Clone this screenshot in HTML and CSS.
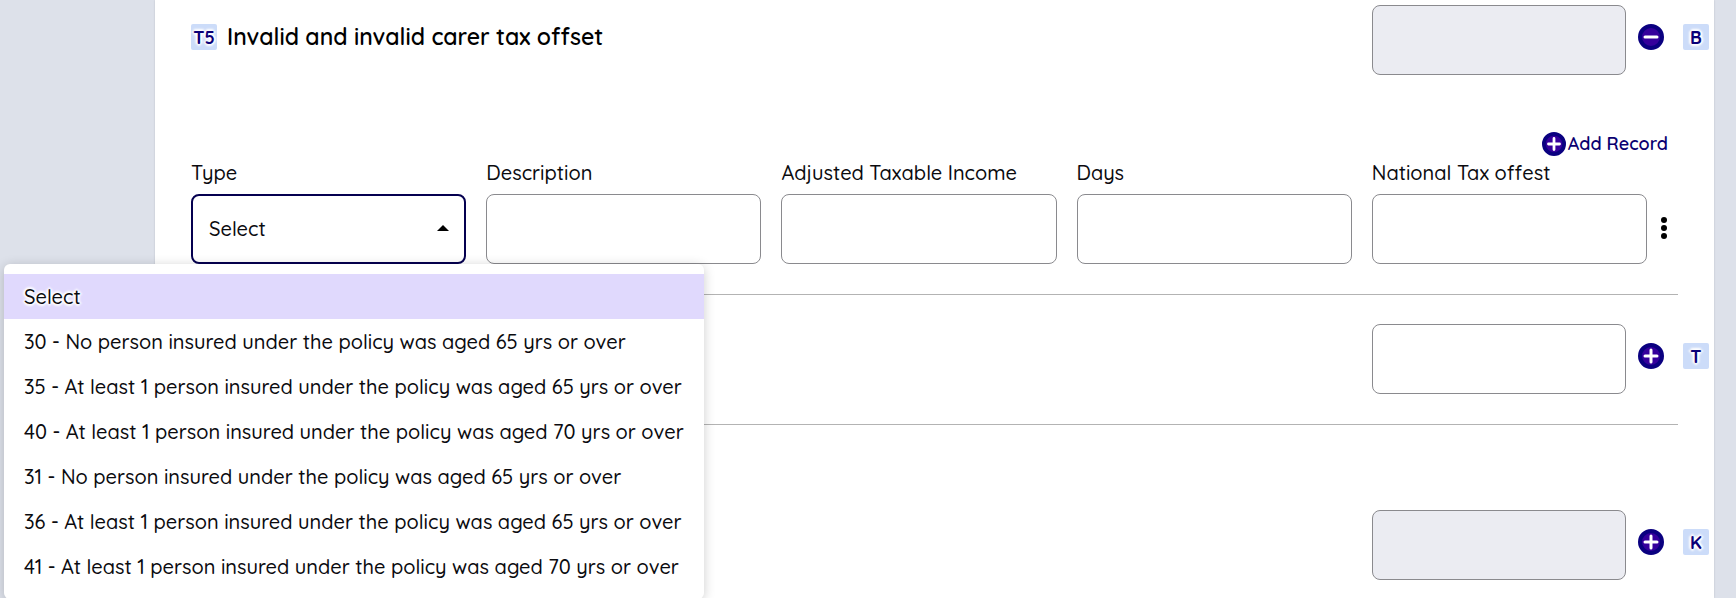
FILE: index.html
```html
<!DOCTYPE html>
<html lang="en">
<head>
    <meta charset="UTF-8">
    <meta name="viewport" content="width=device-width, initial-scale=1.0">
    <title>Tax offsets</title>
    <link rel="stylesheet" href="styles.css">
</head>
<body>
    <main class="panel">
        <section class="section">
            <div class="row">
                <span class="tag">T5</span>
                <h2 class="title" id="t5-title">Invalid and invalid carer tax offset</h2>
                <input class="box amount" type="text" aria-labelledby="t5-title" disabled>
                <button class="round-btn" type="button" aria-label="Collapse">
                    <svg viewBox="0 0 26 26" width="26" height="26"><circle cx="13" cy="13" r="11" /><path d="M7 13h12" /></svg>
                </button>
                <span class="tag">B</span>
            </div>
            <div class="records">
                <button class="add-record" type="button">
                    <svg viewBox="0 0 26 26" width="24" height="24"><circle cx="13" cy="13" r="11" /><path d="M7 13h12M13 7v12" /></svg>
                    Add Record
                </button>
                <div class="record">
                    <div class="fields">
                        <div class="field">
                            <label for="type">Type</label>
                            <select class="box type-select" id="type">
                                <option>Select</option>
                            </select>
                            <svg class="caret" viewBox="0 0 12 6" width="12" height="6"><path d="M0 6l6-6 6 6z" /></svg>
                            <ul class="menu" role="listbox" aria-label="Type">
                                <li class="selected" role="option" aria-selected="true">Select</li>
                                <li role="option">30 - No person insured under the policy was aged 65 yrs or over</li>
                                <li role="option">35 - At least 1 person insured under the policy was aged 65 yrs or over</li>
                                <li role="option">40 - At least 1 person insured under the policy was aged 70 yrs or over</li>
                                <li role="option">31 - No person insured under the policy was aged 65 yrs or over</li>
                                <li role="option">36 - At least 1 person insured under the policy was aged 65 yrs or over</li>
                                <li role="option">41 - At least 1 person insured under the policy was aged 70 yrs or over</li>
                            </ul>
                        </div>
                        <div class="field">
                            <label for="description">Description</label>
                            <input class="box" type="text" id="description">
                        </div>
                        <div class="field">
                            <label for="income">Adjusted Taxable Income</label>
                            <input class="box" type="text" id="income">
                        </div>
                        <div class="field">
                            <label for="days">Days</label>
                            <input class="box" type="text" id="days">
                        </div>
                        <div class="field">
                            <label for="offset">National Tax offest</label>
                            <input class="box" type="text" id="offset">
                        </div>
                    </div>
                    <button class="more" type="button" aria-label="More">
                        <svg viewBox="0 0 6 22" width="6" height="22"><circle cx="3" cy="3" r="3" /><circle cx="3" cy="11" r="3" /><circle cx="3" cy="19" r="3" /></svg>
                    </button>
                </div>
            </div>
        </section>
        <section class="section">
            <div class="row">
                <input class="box amount" type="text" aria-label="Amount T">
                <button class="round-btn" type="button" aria-label="Expand T">
                    <svg viewBox="0 0 26 26" width="26" height="26"><circle cx="13" cy="13" r="11" /><path d="M7 13h12M13 7v12" /></svg>
                </button>
                <span class="tag">T</span>
            </div>
        </section>
        <section class="section tall">
            <div class="row">
                <input class="box amount" type="text" aria-label="Amount K" disabled>
                <button class="round-btn" type="button" aria-label="Expand K">
                    <svg viewBox="0 0 26 26" width="26" height="26"><circle cx="13" cy="13" r="11" /><path d="M7 13h12M13 7v12" /></svg>
                </button>
                <span class="tag">K</span>
            </div>
        </section>
    </main>
</body>
</html>
```
FILE: styles.css
```css
* {
    box-sizing: border-box;
}
body {
    margin: 0;
    background-color: #dde1ea;
    color: #0b0b0f;
    font-family: Quicksand, Lato, sans-serif;
    font-size: 20px;
    font-weight: 500;
    line-height: 24px;
    overflow: hidden;
}
button,
input,
select {
    font: inherit;
    color: inherit;
}
button {
    padding: 0;
    border: none;
    background: none;
    cursor: pointer;
}
svg {
    display: block;
}
.panel {
    min-height: 100vh;
    margin: 0 22px 0 155px;
    padding: 0 5px 0 36px;
    background-color: #fff;
    box-shadow: 0 0 2px rgba(0, 0, 0, 0.15);
}
.section {
    padding: 29px 0 0;
}
.section:first-child {
    padding-top: 5px;
}
.section::after {
    content: "";
    display: block;
    height: 1px;
    margin: 30px 31px 0 0;
    background-color: #b3b3b3;
}
.section.tall {
    padding-top: 85px;
}
.section.tall::after {
    display: none;
}
.row {
    display: flex;
    align-items: center;
}
.title {
    margin: 0 0 6px 10px;
    color: #000;
    font-size: 23px;
    font-weight: 600;
}
.tag {
    min-width: 26px;
    height: 26px;
    margin-bottom: 6px;
    border-radius: 2px;
    background-color: #ccdcf9;
    color: #0a0078;
    font-size: 18px;
    font-weight: bold;
    line-height: 28px;
    text-align: center;
}
.tag,
.menu .selected {
    text-shadow: 0 0 2px #fff, 2px 0 2px #fff, -2px 0 2px #fff, 0 2px 2px #fff, 0 -2px 2px #fff, 0 0 4px #fff;
}
.box {
    display: block;
    width: 100%;
    height: 70px;
    padding: 0 17px;
    border: 1px solid #8a8a8e;
    border-radius: 8px;
    background-color: #fff;
}
.box:disabled {
    background-color: #ebecf2;
}
.amount {
    width: 254px;
    margin-left: auto;
}
.round-btn {
    margin: 0 19px 6px 12px;
}
.round-btn circle,
.add-record circle {
    fill: #35009c;
    stroke: #0a0080;
    stroke-width: 4;
}
.round-btn path,
.add-record path {
    fill: none;
    stroke: #fff;
    stroke-width: 3;
    stroke-linecap: round;
}
.records {
    margin: 57px 31px 0 0;
}
.add-record {
    display: flex;
    align-items: center;
    gap: 2px;
    margin: 0 10px 5px auto;
    color: #0a0070;
    font-size: 18px;
    font-weight: 600;
}
.record {
    display: flex;
    align-items: flex-end;
}
.fields {
    flex: 1;
    display: grid;
    grid-template-columns: repeat(5, 1fr);
    gap: 20px;
}
.field {
    position: relative;
}
.field label {
    display: block;
    margin-bottom: 9px;
}
.type-select {
    appearance: none;
    border: 2px solid #050050;
    padding: 0 16px;
}
.caret {
    position: absolute;
    right: 17px;
    bottom: 33px;
}
.more {
    display: flex;
    align-items: center;
    justify-content: center;
    width: 31px;
    height: 70px;
    padding: 0 0 2px 2px;
}
.menu {
    position: absolute;
    top: 100%;
    left: -187px;
    z-index: 1;
    width: 700px;
    margin: 0;
    padding: 10px 0;
    border-radius: 6px;
    background-color: #fff;
    box-shadow: 0 2px 12px rgba(0, 0, 0, 0.2);
    list-style: none;
}
.menu li {
    padding: 0 20px;
    line-height: 45px;
    white-space: nowrap;
}
.menu .selected {
    background-color: #e0d9fd;
}
```
